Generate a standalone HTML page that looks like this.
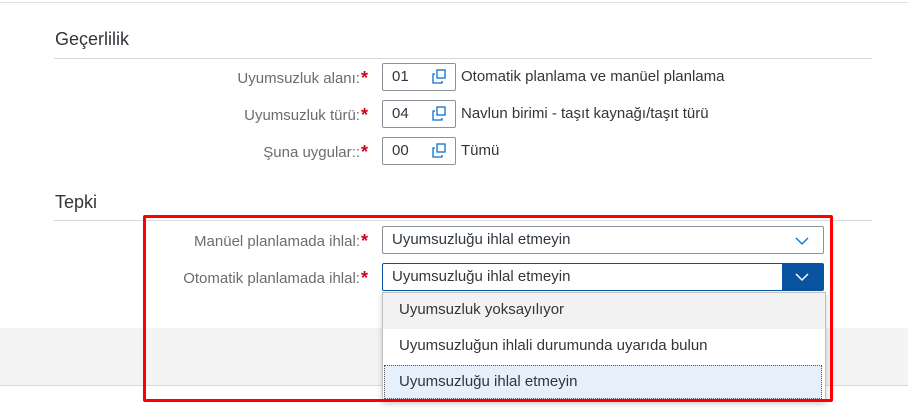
<!DOCTYPE html>
<html><head><meta charset="utf-8"><style>
*{box-sizing:border-box;margin:0;padding:0}
body{width:908px;height:410px;background:#fff;font-family:"Liberation Sans",sans-serif;position:relative;overflow:hidden;color:#32363a}
.a{position:absolute}
.h{font-size:18px;color:#32363a}
.line{height:1px;background:#d9d9d9}
.lbl{font-size:15px;color:#6a6d70;text-align:right;width:340px;left:28px}
.lbl b{color:#d0021b;font-weight:bold;font-size:18px;margin-left:1px;position:relative;top:1px}
.inp{border:1px solid #89919a;border-radius:2px;background:#fff;font-size:15px;color:#32363a;padding-left:9px;line-height:26px}
.txt{font-size:15px;color:#32363a}
.vh{position:absolute;right:8px;top:5px}
</style></head><body>
<div class="a line" style="left:0;top:2px;width:908px;background:#e0e0e0"></div>
<div class="a h" style="left:55px;top:29px">Geçerlilik</div>
<div class="a line" style="left:54px;top:58px;width:818px"></div>

<div class="a lbl" style="top:67px">Uyumsuzluk alanı:<b>*</b></div>
<div class="a inp" style="left:382px;top:63px;width:74px;height:28px">01<svg class="vh" width="16" height="16" viewBox="0 0 16 16" fill="none" stroke="#0a6ed1" stroke-width="1.3"><rect x="6" y="1" width="8" height="8"/><path d="M4 5H2v9h9v-2"/></svg></div>
<div class="a txt" style="left:461px;top:68px">Otomatik planlama ve manüel planlama</div>

<div class="a lbl" style="top:104px">Uyumsuzluk türü:<b>*</b></div>
<div class="a inp" style="left:382px;top:100px;width:74px;height:28px">04<svg class="vh" width="16" height="16" viewBox="0 0 16 16" fill="none" stroke="#0a6ed1" stroke-width="1.3"><rect x="6" y="1" width="8" height="8"/><path d="M4 5H2v9h9v-2"/></svg></div>
<div class="a txt" style="left:461px;top:105px">Navlun birimi - taşıt kaynağı/taşıt türü</div>

<div class="a lbl" style="top:141px">Şuna uygular::<b>*</b></div>
<div class="a inp" style="left:382px;top:137px;width:74px;height:28px">00<svg class="vh" width="16" height="16" viewBox="0 0 16 16" fill="none" stroke="#0a6ed1" stroke-width="1.3"><rect x="6" y="1" width="8" height="8"/><path d="M4 5H2v9h9v-2"/></svg></div>
<div class="a txt" style="left:461px;top:142px">Tümü</div>

<div class="a h" style="left:55px;top:192px">Tepki</div>
<div class="a line" style="left:54px;top:220px;width:818px"></div>

<div class="a" style="left:0;top:328px;width:908px;height:57px;background:#f4f4f4"></div>
<div class="a line" style="left:0;top:385px;width:908px"></div>

<div class="a lbl" style="top:230px">Manüel planlamada ihlal:<b>*</b></div>
<div class="a inp" style="left:382px;top:226px;width:442px;height:28px">Uyumsuzluğu ihlal etmeyin<svg class="a" style="right:14px;top:9px" width="14" height="10" viewBox="0 0 14 10" fill="none" stroke="#0a6ed1" stroke-width="1.3"><path d="M1 2l6 6 6-6"/></svg></div>

<div class="a lbl" style="top:267px">Otomatik planlamada ihlal:<b>*</b></div>
<div class="a inp" style="left:382px;top:263px;width:442px;height:28px;border-color:#0854a0">Uyumsuzluğu ihlal etmeyin<div class="a" style="right:0;top:0;width:41px;height:26px;background:#0854a0"><svg class="a" style="left:13px;top:8px" width="14" height="10" viewBox="0 0 14 10" fill="none" stroke="#fff" stroke-width="1.5"><path d="M1 2l6 6 6-6"/></svg></div></div>

<div class="a" style="left:382px;top:292px;width:444px;height:110px;background:#fff;border:1px solid #c0c0c0;box-shadow:0 2px 6px rgba(0,0,0,.2)">
<div style="height:36px;background:#f2f2f2;font-size:15px;padding:8px 0 0 16px">Uyumsuzluk yoksayılıyor</div>
<div style="height:36px;font-size:15px;padding:8px 0 0 16px">Uyumsuzluğun ihlali durumunda uyarıda bulun</div>
<div style="height:34px;margin:0 3px 0 1px;background:#e5f0fa;border:1px dotted #555;font-size:15px;padding:7px 0 0 14px">Uyumsuzluğu ihlal etmeyin</div>
</div>

<div class="a" style="left:143px;top:215px;width:690px;height:187px;border:3px solid #f00;border-radius:2px"></div>
</body></html>
